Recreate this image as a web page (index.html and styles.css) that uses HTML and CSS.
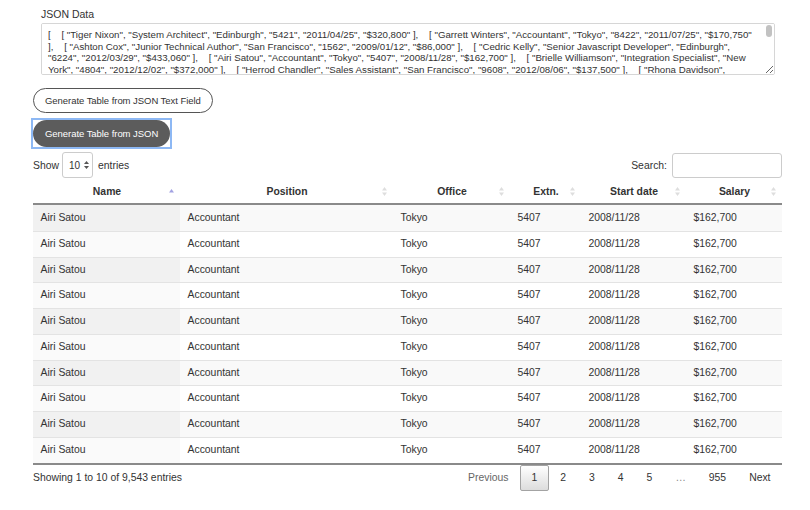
FILE: index.html
```html
<!DOCTYPE html>
<html lang="en">
<head>
<meta charset="utf-8">
<title>JSON to DataTable</title>
<link rel="stylesheet" href="styles.css">
</head>
<body>
<div class="page">
  <div class="field">
    <label class="field-label" for="json">JSON Data</label>
    <div class="json-box">
      <textarea id="json" class="json-text" spellcheck="false">[    [ "Tiger Nixon", "System Architect", "Edinburgh", "5421", "2011/04/25", "$320,800" ],    [ "Garrett Winters", "Accountant", "Tokyo", "8422", "2011/07/25", "$170,750" ],    [ "Ashton Cox", "Junior Technical Author", "San Francisco", "1562", "2009/01/12", "$86,000" ],    [ "Cedric Kelly", "Senior Javascript Developer", "Edinburgh", "6224", "2012/03/29", "$433,060" ],    [ "Airi Satou", "Accountant", "Tokyo", "5407", "2008/11/28", "$162,700" ],    [ "Brielle Williamson", "Integration Specialist", "New York", "4804", "2012/12/02", "$372,000" ],    [ "Herrod Chandler", "Sales Assistant", "San Francisco", "9608", "2012/08/06", "$137,500" ],    [ "Rhona Davidson", "Integration Specialist", "Tokyo", "6200", "2010/10/14", "$327,900" ],    [ "Colleen Hurst", "Javascript Developer", "San Francisco", "2360", "2009/09/15", "$205,500" ],    [ "Sonya Frost", "Software Engineer", "Edinburgh", "1667", "2008/12/13", "$103,600" ],    [ "Jena Gaines", "Office Manager", "London", "3814", "2008/12/19", "$90,560" ],    [ "Quinn Flynn", "Support Lead", "Edinburgh", "9497", "2013/03/03", "$342,000" ] ]</textarea>
      <span class="scroll-thumb"></span>
    </div>
  </div>

  <div class="actions">
    <button class="btn btn-outline" type="button">Generate Table from JSON Text Field</button>
    <span class="focus-ring"><button class="btn btn-dark" type="button">Generate Table from JSON</button></span>
  </div>

  <div class="controls">
    <label class="length">Show
      <span class="len-select">
        <select class="len-native"><option>10</option><option>25</option><option>50</option></select>
        <svg class="len-arrows" viewBox="0 0 5 8" width="5" height="8"><polygon points="2.5,0 5,3 0,3" fill="#555"/><polygon points="0,5 5,5 2.5,8" fill="#555"/></svg>
      </span>entries</label>
    <label class="search">Search:<input class="search-input" type="search"></label>
  </div>

  <table class="data">
    <colgroup>
      <col class="c-name"><col class="c-pos"><col class="c-off"><col class="c-ext"><col class="c-date"><col class="c-sal">
    </colgroup>
    <thead>
      <tr>
        <th><div class="th-in"><span class="th-label">Name</span><svg class="sort" viewBox="0 0 5 9" width="5" height="9"><polygon points="2.5,2 5,5.5 0,5.5" fill="#a2a2e2"/></svg></div></th>
        <th><div class="th-in"><span class="th-label">Position</span><svg class="sort" viewBox="0 0 5 9" width="5" height="9"><polygon points="2.5,0 5,3.5 0,3.5" fill="#dedede"/><polygon points="0,5.5 5,5.5 2.5,9" fill="#dedede"/></svg></div></th>
        <th><div class="th-in"><span class="th-label">Office</span><svg class="sort" viewBox="0 0 5 9" width="5" height="9"><polygon points="2.5,0 5,3.5 0,3.5" fill="#dedede"/><polygon points="0,5.5 5,5.5 2.5,9" fill="#dedede"/></svg></div></th>
        <th><div class="th-in"><span class="th-label">Extn.</span><svg class="sort" viewBox="0 0 5 9" width="5" height="9"><polygon points="2.5,0 5,3.5 0,3.5" fill="#dedede"/><polygon points="0,5.5 5,5.5 2.5,9" fill="#dedede"/></svg></div></th>
        <th><div class="th-in"><span class="th-label">Start date</span><svg class="sort" viewBox="0 0 5 9" width="5" height="9"><polygon points="2.5,0 5,3.5 0,3.5" fill="#dedede"/><polygon points="0,5.5 5,5.5 2.5,9" fill="#dedede"/></svg></div></th>
        <th><div class="th-in"><span class="th-label">Salary</span><svg class="sort" viewBox="0 0 5 9" width="5" height="9"><polygon points="2.5,0 5,3.5 0,3.5" fill="#dedede"/><polygon points="0,5.5 5,5.5 2.5,9" fill="#dedede"/></svg></div></th>
      </tr>
    </thead>
    <tbody>
      <tr><td>Airi Satou</td><td>Accountant</td><td>Tokyo</td><td>5407</td><td>2008/11/28</td><td>$162,700</td></tr>
      <tr><td>Airi Satou</td><td>Accountant</td><td>Tokyo</td><td>5407</td><td>2008/11/28</td><td>$162,700</td></tr>
      <tr><td>Airi Satou</td><td>Accountant</td><td>Tokyo</td><td>5407</td><td>2008/11/28</td><td>$162,700</td></tr>
      <tr><td>Airi Satou</td><td>Accountant</td><td>Tokyo</td><td>5407</td><td>2008/11/28</td><td>$162,700</td></tr>
      <tr><td>Airi Satou</td><td>Accountant</td><td>Tokyo</td><td>5407</td><td>2008/11/28</td><td>$162,700</td></tr>
      <tr><td>Airi Satou</td><td>Accountant</td><td>Tokyo</td><td>5407</td><td>2008/11/28</td><td>$162,700</td></tr>
      <tr><td>Airi Satou</td><td>Accountant</td><td>Tokyo</td><td>5407</td><td>2008/11/28</td><td>$162,700</td></tr>
      <tr><td>Airi Satou</td><td>Accountant</td><td>Tokyo</td><td>5407</td><td>2008/11/28</td><td>$162,700</td></tr>
      <tr><td>Airi Satou</td><td>Accountant</td><td>Tokyo</td><td>5407</td><td>2008/11/28</td><td>$162,700</td></tr>
      <tr><td>Airi Satou</td><td>Accountant</td><td>Tokyo</td><td>5407</td><td>2008/11/28</td><td>$162,700</td></tr>
    </tbody>
  </table>

  <div class="footer">
    <div class="info">Showing 1 to 10 of 9,543 entries</div>
    <div class="paginate">
      <a class="pg disabled">Previous</a>
      <a class="pg current">1</a>
      <a class="pg">2</a>
      <a class="pg">3</a>
      <a class="pg">4</a>
      <a class="pg">5</a>
      <span class="pg ellipsis">…</span>
      <a class="pg">955</a>
      <a class="pg">Next</a>
    </div>
  </div>
</div>
</body>
</html>
```

FILE: styles.css
```css
* { box-sizing: border-box; }

body {
  margin: 0;
  background: #fff;
  color: #333;
  font-family: "Liberation Sans", Arial, Helvetica, sans-serif;
  font-size: 10.4px;
}

.page {
  padding: 8px 28px 0 33px;
}

/* JSON field */
.field {
  padding: 0 7px 0 8px;
}

.field-label {
  display: block;
  height: 12px;
  line-height: 12px;
  margin-bottom: 3px;
  font-size: 10.5px;
  color: #333;
}

.json-box {
  position: relative;
  margin-bottom: 13px;
}

.json-text {
  display: block;
  width: 100%;
  height: 52px;
  margin: 0;
  padding: 5px 20px 0 6px;
  border: 1px solid #d6d6d6;
  border-radius: 2px;
  font-family: "Liberation Sans", Arial, Helvetica, sans-serif;
  font-size: 9.7px;
  line-height: 11.67px;
  color: #333;
  resize: vertical;
  overflow-y: auto;
}

.scroll-thumb {
  position: absolute;
  top: 2px;
  right: 3px;
  width: 6px;
  height: 12px;
  border-radius: 3px;
  background: #c2c2c2;
}

/* buttons */
.actions {
  display: flex;
  flex-direction: column;
  align-items: flex-start;
  gap: 5px;
}

.btn {
  font-family: "Liberation Sans", Arial, Helvetica, sans-serif;
  font-size: 9.5px;
  letter-spacing: -0.05px;
  border-radius: 14px;
  cursor: pointer;
  white-space: nowrap;
}

.btn-outline {
  height: 25px;
  padding: 0 11px;
  background: #fff;
  color: #333;
  border: 1px solid #555;
}

.focus-ring {
  display: block;
  margin-left: -2px;
  border: 2px solid #8db8f4;
}

.btn-dark {
  display: block;
  height: 27px;
  padding: 0 12px;
  background: #5c5c5c;
  color: #fff;
  border: none;
  outline: none;
}

/* length + search */
.controls {
  display: flex;
  justify-content: space-between;
  align-items: center;
  height: 27px;
  margin-top: 2.5px;
}

.length {
  display: flex;
  align-items: center;
}

.len-select {
  display: inline-flex;
  align-items: center;
  justify-content: space-between;
  width: 31px;
  height: 26px;
  margin: 0 5px 0 3px;
  padding: 0 3px 0 0;
  border: 1px solid #ccc;
  border-radius: 3px;
  background: #fff;
}

.len-native {
  appearance: none;
  -webkit-appearance: none;
  border: 0;
  background: transparent;
  padding: 0 0 0 6px;
  width: 20px;
  font-family: inherit;
  font-size: 10px;
  color: #333;
  outline: none;
}

.len-arrows { display: block; }

.search {
  display: flex;
  align-items: center;
}

.search-input {
  width: 110px;
  height: 25px;
  margin-left: 5px;
  border: 1px solid #ccc;
  border-radius: 3px;
  background: #fff;
  outline: none;
}

/* table */
.data {
  width: 100%;
  table-layout: fixed;
  border-collapse: separate;
  border-spacing: 0;
  border-bottom: 2px solid #8a8a8a;
}

.c-name { width: 147px; }
.c-pos  { width: 213px; }
.c-off  { width: 117px; }
.c-ext  { width: 71px; }
.c-date { width: 105px; }
.c-sal  { width: 96px; }

.data th {
  padding: 7px 6px 5px 12px;
  line-height: 12.7px;
  font-weight: bold;
  color: #333;
  border-bottom: 2px solid #8a8a8a;
}

.th-in {
  display: flex;
  align-items: center;
}

.th-label {
  flex: 1;
  text-align: center;
  white-space: nowrap;
}

.sort {
  flex: none;
  display: block;
}

.data td {
  padding: 6px 7px 6px 7.5px;
  line-height: 12.73px;
  color: #333;
  border-top: 1px solid #e3e3e3;
  white-space: nowrap;
}

.data tbody tr:first-child td {
  border-top: 0;
  padding-top: 7px;
}

.data tbody tr:nth-child(odd) td { background: #f9f9f9; }
.data tbody tr:nth-child(odd) td:first-child { background: #f1f1f1; }
.data tbody tr:nth-child(even) td { background: #fff; }
.data tbody tr:nth-child(even) td:first-child { background: #fafafa; }

/* footer */
.footer {
  display: flex;
  justify-content: space-between;
  align-items: center;
  height: 26px;
  margin-top: 0;
}

.paginate {
  display: flex;
  align-items: center;
}

.pg {
  display: block;
  height: 26px;
  line-height: 24px;
  padding: 0 10.5px;
  border: 1px solid transparent;
  border-radius: 2px;
  color: #333;
  text-decoration: none;
}

.pg.disabled { color: #666; }

.pg.current {
  border-color: #a3a3a3;
  background: linear-gradient(#ffffff, #dcdcdc);
}

.pg.ellipsis { color: #888; }
```
